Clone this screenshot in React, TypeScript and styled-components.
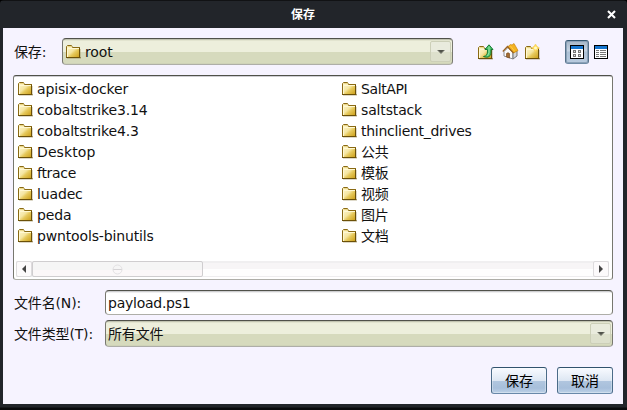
import React from "react";
import styled, { createGlobalStyle, css } from "styled-components";

const GlobalStyle = createGlobalStyle`
  * { box-sizing: border-box; }
  html, body { margin: 0; background: #000; overflow: hidden; }
  body { font: 14px/20px "DejaVu Sans", "Noto Sans CJK SC", sans-serif; color: #111; letter-spacing: -.15px; }
  svg { display: block; flex: none; }
`;

const Window = styled.div`
  width: 627px;
  height: 410px;
  display: flex;
  flex-direction: column;
  padding: 0 4px 6px 3px;
  background: linear-gradient(#111214 0 1px, #22252a 1px 407px, #090a0c 408px);
  border-radius: 4px 4px 0 0;
`;

const TitleBar = styled.header`
  height: 28px;
  flex: none;
  display: grid;
  grid-template-columns: 24px 1fr 24px;
  align-items: center;
`;

const Title = styled.h1`
  grid-column: 2;
  margin: 0;
  padding-right: 20px;
  text-align: center;
  color: #fff;
  letter-spacing: 0;
  font: bold 12px/28px "Noto Sans CJK SC", sans-serif;
`;

const CloseButton = styled.button`
  border: 0;
  padding: 0 0 0 8px;
  background: none;
`;

const Body = styled.main`
  flex: 1;
  display: flex;
  flex-direction: column;
  padding: 10px 10px 10px;
  background: #f6f3ff;
`;

const Toolbar = styled.div`
  height: 27px;
  display: flex;
  align-items: center;
  margin-bottom: 10px;
`;

const Label = styled.label<{ $width: number }>`
  width: ${(p) => p.$width}px;
  flex: none;
  padding-left: 1px;
  white-space: nowrap;
`;

const fieldBorder = css`
  border: 1px solid;
  border-color: #50514a #77776f #aeaea8 #77776f;
  border-radius: 4px;
`;

const Combo = styled.div`
  ${fieldBorder}
  flex: 1;
  height: 27px;
  display: flex;
  align-items: center;
  padding: 0 1px 0 2px;
  background: linear-gradient(#c1c3b0 0 1px, #e2e4cf 1px 2px, #edefdc 2px 13px, #d6dabd 13px 24px, #cfd3b8 24px);
`;

const ComboText = styled.span`
  flex: 1;
  white-space: pre;
`;

const ComboArrow = styled.span`
  width: 21px;
  height: 21px;
  display: flex;
  align-items: center;
  justify-content: center;
  border: 1px solid #cccfb8;
  border-radius: 2px;
  background: linear-gradient(#e9ebdd 0 10px, #dde0cc 10px);
`;

const FolderGlyph = styled.span`
  display: block;
  width: 19px;
  flex: none;
`;

const ComboFolder = styled.span`
  display: flex;
  flex: none;
  margin-left: 1px;
`;

const ToolIcons = styled.div`
  width: 160px;
  height: 27px;
  display: grid;
  grid-template-columns: 24px 23px 44px 24px 24px;
  padding-left: 21px;
  align-items: center;
`;

const ToolButton = styled.button<{ $active?: boolean }>`
  width: 24px;
  height: 24px;
  display: grid;
  place-items: center;
  padding: 0;
  border: 1px solid transparent;
  border-radius: 3px;
  background: none;
  ${(p) =>
    p.$active &&
    css`
      border-color: #34566f #55718a #6f8ba5;
      background: linear-gradient(#a5b5c6, #c6d4e3 45%, #adc1d6 50%, #b9cbdf);
      box-shadow: inset 0 0 0 1px #8ba1b7;
    `}
`;

const FilePane = styled.section`
  ${fieldBorder}
  height: 205px;
  display: flex;
  flex-direction: column;
  padding: 2px 3px 2px 2px;
  background: linear-gradient(#cfced3 0 1px, #fff 1px);
  border-radius: 3px;
`;

const FileGrid = styled.ul`
  flex: 1;
  display: grid;
  grid-template-rows: repeat(8, 21px);
  grid-template-columns: 324px 1fr;
  grid-auto-flow: column;
  margin: 0;
  padding: 0 0 0 2px;
  list-style: none;
`;

const FileItem = styled.li<{ $spacing?: number }>`
  height: 21px;
  display: flex;
  align-items: center;
  white-space: nowrap;
  letter-spacing: ${(p) => p.$spacing ?? -0.15}px;
`;

const ScrollBar = styled.div`
  height: 16px;
  flex: none;
  display: flex;
  background: linear-gradient(#f0eff0 0 2px, #f7f5f6 2px 8px, #fefefe 8px 15px, #eeedef 15px);
`;

const ScrollArrow = styled.span`
  width: 16px;
  height: 16px;
  display: grid;
  place-items: center;
  border: 1px solid #dddbdd;
  border-radius: 2px;
  background: #fcfafb;
`;

const ScrollTrack = styled.div`
  flex: 1;
`;

const ScrollThumb = styled.div`
  width: 171px;
  height: 16px;
  display: grid;
  place-items: center;
  border: 1px solid #cfcdcf;
  border-radius: 2px;
  background: linear-gradient(#f5f5f5 0 8px, #fbf7f8 8px);
`;

const FormRow = styled.div<{ $top: number }>`
  display: flex;
  align-items: center;
  margin-top: ${(p) => p.$top}px;
`;

const NameInput = styled.input`
  ${fieldBorder}
  flex: 1;
  min-width: 0;
  height: 25px;
  padding: 1px 3px 0 2px;
  font: inherit;
  letter-spacing: -0.25px;
  color: inherit;
  outline: none;
  background: linear-gradient(#cdcdcf 0 1px, #efeff0 1px 2px, #fff 2px);
`;

const Actions = styled.footer`
  display: flex;
  justify-content: flex-end;
  gap: 10px;
  margin-top: 20px;
`;

const ActionButton = styled.button`
  width: 56px;
  height: 27px;
  padding: 0;
  border: 1px solid;
  border-color: #31536d #4b6b88 #6988aa;
  border-radius: 3px;
  color: #000;
  font: inherit;
  background: linear-gradient(#f8faff, #dce6f2 13px, #b1c6df 13px, #a7bfdb 20px, #bed1e8);
  box-shadow: inset 0 0 0 1px #ffffff50;
`;

const FolderShape = () => (
  <>
    <path d="M.5 12.500V1.500l1-1h4l1 1.500h7.500v10.500z" fill="url(#folderFill)" />
    <path d="M.5 13V1.500l1-1h4l1 2H14" fill="none" stroke="#8a6a14" />
    <path d="M1.500 12V3.500H13" fill="none" stroke="#fff8d2" />
    <path d="M1.500 1.500h4" stroke="#ecd98a" />
    <path d="M0 12.500h14.500M13.500 3v10" fill="none" stroke="#6b5008" />
    <path d="M14.500 4v9.500H1" fill="none" stroke="#6b5008" strokeOpacity=".22" />
  </>
);

const Folder = () => (
  <FolderGlyph>
    <svg width="15" height="14" viewBox="0 0 15 14">
      <FolderShape />
    </svg>
  </FolderGlyph>
);

const FolderGradient = () => (
  <svg width="0" height="0">
    <defs>
      <linearGradient id="folderFill" x1="0" y1="0" x2="1" y2="1">
        <stop offset="0" stopColor="#fff8d4" />
        <stop offset=".45" stopColor="#f5e6a2" />
        <stop offset=".6" stopColor="#e6c95c" />
        <stop offset="1" stopColor="#c99a12" />
      </linearGradient>
    </defs>
  </svg>
);

const DownArrow = () => (
  <svg width="8" height="4" viewBox="0 0 8 4">
    <path d="M0 0h8L4 4z" fill="#77796e" />
    <path d="M1 0h6L4 2.500z" fill="#4f514a" />
  </svg>
);

const UpFolderIcon = () => (
  <svg width="16" height="16" viewBox="0 0 16 16">
    <g transform="translate(0 2)"><FolderShape /></g>
    <path d="M5.500 12.500c3-.5 4-2 4-5.500V5.500H7L11 .8l4 4.700h-2V8c0 4-2.500 6.500-7.500 4.500z" fill="#4cc56d" stroke="#187a35" />
    <path d="M11 2.500v6L9.500 12" fill="none" stroke="#96e5a6" />
  </svg>
);

const HomeIcon = () => (
  <svg width="17" height="17" viewBox="0 0 17 17">
    <path d="M2 8.500 6 4.500l5 5V16l-9-3z" fill="#fbfbfd" stroke="#8c8c90" />
    <path d="m11 9.500 4-2V13l-4 3z" fill="#d5d6da" stroke="#77777b" />
    <path d="M4.500 14v-3.500q1.500-1.500 3 0V15z" fill="#a36b32" stroke="#7d4d20" strokeWidth=".7" />
    <path d="m5.500 4 3-2.500L10 2l2-1.500L16 7.500 11.500 10z" fill="#f4b323" stroke="#c8860e" strokeWidth=".7" />
    <path d="m.8 8.500 4.700-5 6 6.500" fill="none" stroke="#9a6222" strokeWidth="1.200" />
    <path d="m8.500 3 4 5" stroke="#ffcb45" />
  </svg>
);

const NewFolderIcon = () => (
  <svg width="16" height="16" viewBox="0 0 16 16">
    <g transform="translate(0 2)"><FolderShape /></g>
    <path d="m10.500 0 1.500 2.300 2.500 1.700-2.500 1.500-1.500 2.500L9 5.500 6.500 4 9 2.300z" fill="#ffdc5c" stroke="#f3c952" strokeWidth=".5" />
    <circle cx="10.500" cy="4" r="1.500" fill="#fffac8" />
  </svg>
);

const ViewIcon = ({ kind }: { kind: "grid" | "details" }) => (
  <svg width="14" height="14" viewBox="0 0 14 14" shapeRendering="crispEdges">
    <path d="M0 0h14v14H0z" />
    <path d="M1 4h12v9H1z" fill="#fff" />
    <path d="M1 1h12v3H1z" fill="#1676cf" />
    {kind === "grid" ? (
      <path d="M3.500 5.500h2v2h-2zM8.500 5.500h2v2h-2zM3.500 9.500h2v2h-2zM8.500 9.500h2v2h-2z" fill="#ddd" stroke="#777" />
    ) : (
      <path d="M2 5.500h3M6 5.500h6M2 7.500h3M6 7.500h6M2 9.500h3M6 9.500h6M2 11.500h3M6 11.500h6" stroke="#777" />
    )}
  </svg>
);

const files: { name: string; spacing?: number }[] = [
  { name: "apisix-docker" },
  { name: "cobaltstrike3.14" },
  { name: "cobaltstrike4.3" },
  { name: "Desktop", spacing: 0.1 },
  { name: "ftrace", spacing: -0.3 },
  { name: "luadec" },
  { name: "peda" },
  { name: "pwntools-binutils" },
  { name: "SaltAPI", spacing: -0.4 },
  { name: "saltstack" },
  { name: "thinclient_drives", spacing: -0.28 },
  { name: "公共" },
  { name: "模板" },
  { name: "视频" },
  { name: "图片" },
  { name: "文档" },
];

export default function App() {
  return (
    <Window>
      <GlobalStyle />
      <TitleBar>
        <Title>保存</Title>
        <CloseButton aria-label="关闭">
          <svg width="9" height="9" viewBox="0 0 9 9">
            <path d="m1 1 7 7M8 1 1 8" stroke="#fff" strokeWidth="2.100" />
          </svg>
        </CloseButton>
      </TitleBar>
      <Body>
        <Toolbar>
          <Label $width={49}>保存:</Label>
          <Combo>
            <ComboFolder><Folder /></ComboFolder>
            <ComboText>root</ComboText>
            <ComboArrow><DownArrow /></ComboArrow>
          </Combo>
          <ToolIcons>
            <ToolButton aria-label="向上"><UpFolderIcon /></ToolButton>
            <ToolButton aria-label="主目录"><HomeIcon /></ToolButton>
            <ToolButton aria-label="新建文件夹"><NewFolderIcon /></ToolButton>
            <ToolButton $active aria-label="列表"><ViewIcon kind="grid" /></ToolButton>
            <ToolButton aria-label="详细信息"><ViewIcon kind="details" /></ToolButton>
          </ToolIcons>
        </Toolbar>
        <FilePane>
          <FileGrid>
            {files.map(({ name, spacing }) => (
              <FileItem key={name} $spacing={spacing}><Folder />{name}</FileItem>
            ))}
          </FileGrid>
          <ScrollBar>
            <ScrollArrow>
              <svg width="4" height="8" viewBox="0 0 4 8"><path d="M4 0v8L0 4z" fill="#444" /></svg>
            </ScrollArrow>
            <ScrollTrack>
              <ScrollThumb>
                <svg width="11" height="11" viewBox="0 0 11 11">
                  <path d="M1 5.500h9" stroke="#d5d3d5" />
                  <circle cx="5.500" cy="5.500" r="4.500" fill="none" stroke="#e3e1e3" />
                </svg>
              </ScrollThumb>
            </ScrollTrack>
            <ScrollArrow>
              <svg width="4" height="8" viewBox="0 0 4 8"><path d="M0 0v8l4-4z" fill="#444" /></svg>
            </ScrollArrow>
          </ScrollBar>
        </FilePane>
        <FormRow $top={10}>
          <Label $width={92}>文件名(N):</Label>
          <NameInput defaultValue="payload.ps1" />
        </FormRow>
        <FormRow $top={5}>
          <Label $width={92}>文件类型(T):</Label>
          <Combo><ComboText>所有文件</ComboText><ComboArrow><DownArrow /></ComboArrow></Combo>
        </FormRow>
        <Actions>
          <ActionButton>保存</ActionButton>
          <ActionButton>取消</ActionButton>
        </Actions>
      </Body>
      <FolderGradient />
    </Window>
  );
}
